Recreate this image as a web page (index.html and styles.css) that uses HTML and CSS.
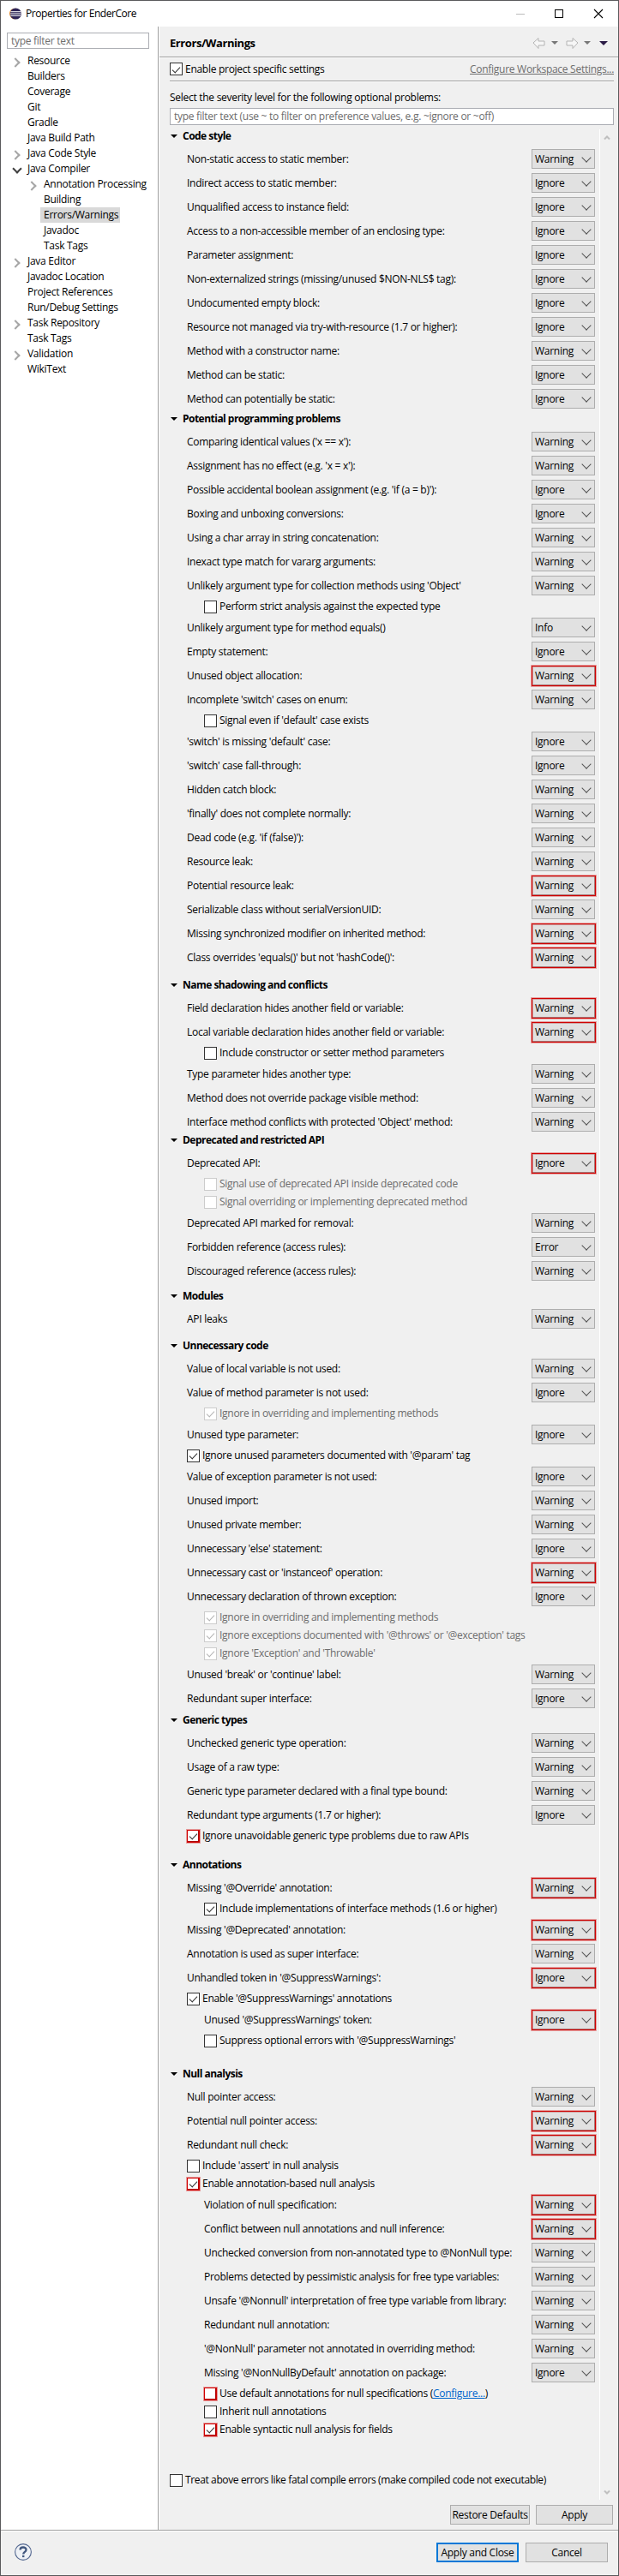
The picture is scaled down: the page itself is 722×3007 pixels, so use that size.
FILE: index.html
```html
<!DOCTYPE html>
<html lang="en">
<head>
<meta charset="utf-8">
<title>Properties for EnderCore</title>
<link rel="stylesheet" href="styles.css">
</head>
<body>
<div class="window">
  <header class="titlebar">
    <svg class="logo" width="14" height="14" viewBox="0 0 14 14"><circle cx="6.3" cy="7" r="6.3" fill="#f0932b"/><circle cx="7.3" cy="7" r="6.6" fill="#2c2255"/><path d="M1.3 4.700h12M.9 7h12.8M1.3 9.300h12" stroke="#fff" stroke-width="1"/></svg>
    <span class="title">Properties for EnderCore</span>
    <svg class="winbtns" width="102" height="12" viewBox="0 0 102 12"><path d="M0 6.5h10" stroke="#bbb"/><rect x="45.5" y="1.5" width="9" height="9" fill="none" stroke="#000"/><path d="M91 1l10 10M101 1L91 11" stroke="#000" stroke-width="1.1"/></svg>
  </header>
  <div class="main">
    <nav class="sidebar">
      <div class="filter">type filter text</div>
      <ul class="tree">
        <li class="closed">Resource</li>
        <li>Builders</li>
        <li>Coverage</li>
        <li>Git</li>
        <li>Gradle</li>
        <li>Java Build Path</li>
        <li class="closed">Java Code Style</li>
        <li class="open">Java Compiler</li>
        <li class="sub closed">Annotation Processing</li>
        <li class="sub">Building</li>
        <li class="sub"><span class="selected">Errors/Warnings</span></li>
        <li class="sub">Javadoc</li>
        <li class="sub">Task Tags</li>
        <li class="closed">Java Editor</li>
        <li>Javadoc Location</li>
        <li>Project References</li>
        <li>Run/Debug Settings</li>
        <li class="closed">Task Repository</li>
        <li>Task Tags</li>
        <li class="closed">Validation</li>
        <li>WikiText</li>
      </ul>
    </nav>
    <div class="page">
      <div class="pagehead">
        <h1>Errors/Warnings</h1>
        <svg width="88" height="14" viewBox="0 0 88 14"><path d="M1 7l6-5.5V5h7v5H7v3.500z" fill="#f6f6f6" stroke="#b4b4b4"/><path d="M22 5h8l-4 4z" fill="#777"/><path d="M53 7l-6-5.500V5h-7v5h7v3.500z" fill="#f6f6f6" stroke="#b4b4b4"/><path d="M60 5h8l-4 4z" fill="#777"/><path d="M78 5h10l-5 5z" fill="#2b1b45"/></svg>
      </div>
      <div class="enable">
        <label class="check on">Enable project specific settings</label>
        <a class="disabled">Configure Workspace Settings...</a>
      </div>
      <p class="hint">Select the severity level for the following optional problems:</p>
      <div class="filter wide">type filter text (use ~ to filter on preference values, e.g. ~ignore or ~off)</div>
      <div class="scroller">
        <div class="options">
          <section class="g1"><h2>Code style</h2>
            <div class="row">Non-static access to static member:<span class="combo">Warning</span></div>
            <div class="row">Indirect access to static member:<span class="combo">Ignore</span></div>
            <div class="row">Unqualified access to instance field:<span class="combo">Ignore</span></div>
            <div class="row">Access to a non-accessible member of an enclosing type:<span class="combo">Ignore</span></div>
            <div class="row">Parameter assignment:<span class="combo">Ignore</span></div>
            <div class="row">Non-externalized strings (missing/unused $NON-NLS$ tag):<span class="combo">Ignore</span></div>
            <div class="row">Undocumented empty block:<span class="combo">Ignore</span></div>
            <div class="row">Resource not managed via try-with-resource (1.7 or higher):<span class="combo">Ignore</span></div>
            <div class="row">Method with a constructor name:<span class="combo">Warning</span></div>
            <div class="row">Method can be static:<span class="combo">Ignore</span></div>
            <div class="row">Method can potentially be static:<span class="combo">Ignore</span></div>
          </section>
          <section class="g2"><h2>Potential programming problems</h2>
            <div class="row">Comparing identical values ('x == x'):<span class="combo">Warning</span></div>
            <div class="row">Assignment has no effect (e.g. 'x = x'):<span class="combo">Warning</span></div>
            <div class="row">Possible accidental boolean assignment (e.g. 'if (a = b)'):<span class="combo">Ignore</span></div>
            <div class="row">Boxing and unboxing conversions:<span class="combo">Ignore</span></div>
            <div class="row">Using a char array in string concatenation:<span class="combo">Warning</span></div>
            <div class="row">Inexact type match for vararg arguments:<span class="combo">Warning</span></div>
            <div class="row">Unlikely argument type for collection methods using 'Object'<span class="combo">Warning</span></div>
            <label class="check in">Perform strict analysis against the expected type</label>
            <div class="row">Unlikely argument type for method equals()<span class="combo">Info</span></div>
            <div class="row">Empty statement:<span class="combo">Ignore</span></div>
            <div class="row">Unused object allocation:<span class="combo red">Warning</span></div>
            <div class="row">Incomplete 'switch' cases on enum:<span class="combo">Warning</span></div>
            <label class="check in">Signal even if 'default' case exists</label>
            <div class="row">'switch' is missing 'default' case:<span class="combo">Ignore</span></div>
            <div class="row">'switch' case fall-through:<span class="combo">Ignore</span></div>
            <div class="row">Hidden catch block:<span class="combo">Warning</span></div>
            <div class="row">'finally' does not complete normally:<span class="combo">Warning</span></div>
            <div class="row">Dead code (e.g. 'if (false)'):<span class="combo">Warning</span></div>
            <div class="row">Resource leak:<span class="combo">Warning</span></div>
            <div class="row">Potential resource leak:<span class="combo red">Warning</span></div>
            <div class="row">Serializable class without serialVersionUID:<span class="combo">Warning</span></div>
            <div class="row">Missing synchronized modifier on inherited method:<span class="combo red">Warning</span></div>
            <div class="row">Class overrides 'equals()' but not 'hashCode()':<span class="combo red">Warning</span></div>
          </section>
          <section class="g3"><h2>Name shadowing and conflicts</h2>
            <div class="row">Field declaration hides another field or variable:<span class="combo red">Warning</span></div>
            <div class="row">Local variable declaration hides another field or variable:<span class="combo red">Warning</span></div>
            <label class="check in">Include constructor or setter method parameters</label>
            <div class="row">Type parameter hides another type:<span class="combo">Warning</span></div>
            <div class="row">Method does not override package visible method:<span class="combo">Warning</span></div>
            <div class="row">Interface method conflicts with protected 'Object' method:<span class="combo">Warning</span></div>
          </section>
          <section class="g4"><h2>Deprecated and restricted API</h2>
            <div class="row">Deprecated API:<span class="combo red">Ignore</span></div>
            <label class="check in off">Signal use of deprecated API inside deprecated code</label>
            <label class="check in off">Signal overriding or implementing deprecated method</label>
            <div class="row">Deprecated API marked for removal:<span class="combo">Warning</span></div>
            <div class="row">Forbidden reference (access rules):<span class="combo">Error</span></div>
            <div class="row">Discouraged reference (access rules):<span class="combo">Warning</span></div>
          </section>
          <section class="g5"><h2>Modules</h2>
            <div class="row">API leaks<span class="combo">Warning</span></div>
          </section>
          <section class="g6"><h2>Unnecessary code</h2>
            <div class="row">Value of local variable is not used:<span class="combo">Warning</span></div>
            <div class="row">Value of method parameter is not used:<span class="combo">Ignore</span></div>
            <label class="check in off on">Ignore in overriding and implementing methods</label>
            <div class="row">Unused type parameter:<span class="combo">Ignore</span></div>
            <label class="check on">Ignore unused parameters documented with '@param' tag</label>
            <div class="row">Value of exception parameter is not used:<span class="combo">Ignore</span></div>
            <div class="row">Unused import:<span class="combo">Warning</span></div>
            <div class="row">Unused private member:<span class="combo">Warning</span></div>
            <div class="row">Unnecessary 'else' statement:<span class="combo">Ignore</span></div>
            <div class="row">Unnecessary cast or 'instanceof' operation:<span class="combo red">Warning</span></div>
            <div class="row">Unnecessary declaration of thrown exception:<span class="combo">Ignore</span></div>
            <label class="check in off on">Ignore in overriding and implementing methods</label>
            <label class="check in off on">Ignore exceptions documented with '@throws' or '@exception' tags</label>
            <label class="check in off on">Ignore 'Exception' and 'Throwable'</label>
            <div class="row">Unused 'break' or 'continue' label:<span class="combo">Warning</span></div>
            <div class="row">Redundant super interface:<span class="combo">Ignore</span></div>
          </section>
          <section class="g7"><h2>Generic types</h2>
            <div class="row">Unchecked generic type operation:<span class="combo">Warning</span></div>
            <div class="row">Usage of a raw type:<span class="combo">Warning</span></div>
            <div class="row">Generic type parameter declared with a final type bound:<span class="combo">Warning</span></div>
            <div class="row">Redundant type arguments (1.7 or higher):<span class="combo">Ignore</span></div>
            <label class="check on red">Ignore unavoidable generic type problems due to raw APIs</label>
          </section>
          <section class="g8"><h2>Annotations</h2>
            <div class="row">Missing '@Override' annotation:<span class="combo red">Warning</span></div>
            <label class="check in on">Include implementations of interface methods (1.6 or higher)</label>
            <div class="row">Missing '@Deprecated' annotation:<span class="combo red">Warning</span></div>
            <div class="row">Annotation is used as super interface:<span class="combo">Warning</span></div>
            <div class="row">Unhandled token in '@SuppressWarnings':<span class="combo red">Ignore</span></div>
            <label class="check on">Enable '@SuppressWarnings' annotations</label>
            <div class="row in">Unused '@SuppressWarnings' token:<span class="combo red">Ignore</span></div>
            <label class="check in">Suppress optional errors with '@SuppressWarnings'</label>
          </section>
          <section class="g9"><h2>Null analysis</h2>
            <div class="row">Null pointer access:<span class="combo">Warning</span></div>
            <div class="row">Potential null pointer access:<span class="combo red">Warning</span></div>
            <div class="row">Redundant null check:<span class="combo red">Warning</span></div>
            <label class="check">Include 'assert' in null analysis</label>
            <label class="check on red">Enable annotation-based null analysis</label>
            <div class="row in">Violation of null specification:<span class="combo red">Warning</span></div>
            <div class="row in">Conflict between null annotations and null inference:<span class="combo red">Warning</span></div>
            <div class="row in">Unchecked conversion from non-annotated type to @NonNull type:<span class="combo">Warning</span></div>
            <div class="row in">Problems detected by pessimistic analysis for free type variables:<span class="combo">Warning</span></div>
            <div class="row in">Unsafe '@Nonnull' interpretation of free type variable from library:<span class="combo">Warning</span></div>
            <div class="row in">Redundant null annotation:<span class="combo">Warning</span></div>
            <div class="row in">'@NonNull' parameter not annotated in overriding method:<span class="combo">Warning</span></div>
            <div class="row in">Missing '@NonNullByDefault' annotation on package:<span class="combo">Ignore</span></div>
            <label class="check in red"><span>Use default annotations for null specifications (<a class="link">Configure...</a>)</span></label>
            <label class="check in">Inherit null annotations</label>
            <label class="check in on red">Enable syntactic null analysis for fields</label>
          </section>
          <label class="check fatal">Treat above errors like fatal compile errors (make compiled code not executable)</label>
        </div>
        <div class="scrollbar">
          <svg width="8" height="7" viewBox="0 0 8 7"><path d="M1 5.500l3-3 3 3" fill="none" stroke="#bfbfbf" stroke-width="2"/></svg>
          <svg width="8" height="7" viewBox="0 0 8 7"><path d="M1 1.500l3 3 3-3" fill="none" stroke="#bfbfbf" stroke-width="2"/></svg>
        </div>
      </div>
      <div class="pagebuttons">
        <span class="button restore">Restore Defaults</span>
        <span class="button apply">Apply</span>
      </div>
    </div>
  </div>
  <footer class="footer">
    <svg width="20" height="20" viewBox="0 0 20 20"><circle cx="10" cy="10" r="9.400" fill="#eef1f6" stroke="#52668f" stroke-width="1.100"/><path d="M6.500 7.600C6.500 3.500 13.500 3.500 13.500 7.400c0 2.400-3.300 2.500-3.300 5" fill="none" stroke="#42587f" stroke-width="2.300"/><rect x="9" y="13.900" width="2.400" height="2.200" fill="#42587f"/></svg>
    <span class="spacer"></span>
    <span class="button primary">Apply and Close</span>
    <span class="button cancel">Cancel</span>
  </footer>
</div>
</body>
</html>
```
FILE: styles.css
```css
* { box-sizing: border-box; }
body {
  margin: 0;
  font: 12px/16px "Open Sans", "Noto Sans", sans-serif;
  letter-spacing: -0.28px;
  color: #000;
  white-space: nowrap;
}
.window {
  width: 722px;
  height: 3007px;
  border: 1px solid #5a5a5c;
  background: #f0f0f0;
  display: flex;
  flex-direction: column;
}
.titlebar {
  height: 30px;
  background: #fff;
  display: flex;
  align-items: center;
  padding: 0 17px 0 10px;
}
.title { margin-left: 5px; flex: 1; letter-spacing: -0.45px; }
.main { display: flex; height: 2922px; }
.sidebar {
  width: 184px;
  background: #fff;
  border-right: 1px solid #a0a0a0;
  padding: 7px 10px 0 7px;
}
.filter {
  height: 19px;
  border: 1px solid #abadb3;
  background: #fff;
  color: #6d6d6d;
  padding-left: 4px;
  line-height: 17px;
}
.tree { list-style: none; margin: 5px 0 0; padding: 0; }
.tree li { height: 18px; line-height: 18px; padding-left: 24px; position: relative; }
.tree .sub { padding-left: 43px; }
.tree .closed::before, .tree .open::before {
  content: "";
  position: absolute;
  left: 6px;
  top: 7px;
  width: 6px;
  height: 6px;
  border: solid #a6a6a6;
  border-width: 2px 2px 0 0;
  transform: rotate(45deg);
}
.tree .open::before {
  left: 8px;
  top: 5px;
  border-color: #404040;
  transform: rotate(135deg);
}
.tree .sub.closed::before { left: 25px; }
.selected { display: inline-block; margin-left: -4px; padding: 0 4px; width: 93px; background: #d9d9d9; }
.page { flex: 1; border-left: 1px solid #fff; }
.pagehead {
  height: 36px;
  display: flex;
  justify-content: space-between;
  align-items: center;
  padding: 3px 12px 0 12px;
  border-bottom: 1px solid #a0a0a0;
  box-shadow: 0 1px #fff;
}
.pagehead h1 { font-size: 13px; margin: 0; letter-spacing: -0.43px; }
.enable {
  margin: 0 5px 0 12px;
  height: 28px;
  display: flex;
  justify-content: space-between;
  align-items: center;
  border-bottom: 1px solid #a0a0a0;
  box-shadow: 0 1px #fff;
}
.disabled { color: #6d6d6d; text-decoration: underline; }
.hint { margin: 11px 0 4px 12px; }
.wide { margin: 0 5px 5px 12px; height: 20px; line-height: 18px; }
.scroller { display: flex; height: 2767px; }
.options { width: 514px; border-right: 1px solid #fff; padding-left: 12px; }
.scrollbar {
  flex: 1;
  display: flex;
  flex-direction: column;
  justify-content: space-between;
  align-items: center;
  padding: 6px 6px 5px 0;
}
section { display: flex; flex-direction: column; gap: 5px; padding-left: 20px; }
h2 {
  font-size: 12px;
  line-height: 16px;
  margin: 0 0 2px -20px;
  padding-left: 15px;
  letter-spacing: -0.52px;
  position: relative;
}
h2::before {
  content: "";
  position: absolute;
  left: 1px;
  top: 6px;
  border: 4px solid transparent;
  border-top-color: #000;
  border-bottom: 0;
}
.g1 { padding-bottom: 4px; }
.g2 { padding-bottom: 13px; }
.g3 { padding-bottom: 2px; }
.g4 { padding-bottom: 10px; }
.g5 { padding-bottom: 12px; }
.g6 { padding-bottom: 6px; }
.g7 { padding-bottom: 18px; }
.g8 { padding-bottom: 23px; }
.g9 { padding-bottom: 43px; }
.row {
  height: 23px;
  display: flex;
  justify-content: space-between;
  align-items: center;
  padding-right: 5px;
}
.in { padding-left: 20px; }
.combo {
  width: 74px;
  height: 23px;
  border: 1px solid #adadad;
  background: #e1e1e1;
  line-height: 21px;
  padding-left: 3px;
  position: relative;
}
.combo::after {
  content: "";
  position: absolute;
  right: 5px;
  top: 5px;
  width: 7px;
  height: 7px;
  border: solid #555;
  border-width: 0 1px 1px 0;
  transform: rotate(45deg);
}
.combo.red::before {
  content: "";
  position: absolute;
  inset: -1px -2px -2px -1px;
  border: 1px solid #d00000;
  box-shadow: 0 0 0 1px rgba(208, 0, 0, .3), inset 0 0 0 1px rgba(160, 0, 0, .3);
}
.check { height: 16px; display: flex; align-items: center; position: relative; }
.check::before {
  content: "";
  width: 13px;
  height: 13px;
  margin-right: 3px;
  border: 1px solid #333;
  background: #fff;
  flex: none;
}
.check.on::after {
  content: "";
  position: absolute;
  left: 3px;
  top: 5px;
  width: 8px;
  height: 4px;
  border: solid #333;
  border-width: 0 0 1.300px 1.300px;
  transform: rotate(-47deg);
}
.check.in.on::after { left: 23px; }
.check.off { color: #6d6d6d; }
.check.off::before { border-color: #ccc; }
.check.off.on::after { border-color: #b5b5b5; }
.check.red::before {
  border-color: #d00000;
  box-shadow: 0 0 0 1px rgba(208, 0, 0, .35), inset -1px -1px #b00000;
}
.fatal { letter-spacing: -0.37px; }
.link { color: #0066cc; text-decoration: underline; }
.button {
  height: 23px;
  line-height: 21px;
  border: 1px solid #adadad;
  background: #e1e1e1;
  text-align: center;
}
.pagebuttons { display: flex; justify-content: flex-end; gap: 7px; padding: 6px 6px 0 0; }
.restore { width: 93px; }
.apply { width: 90px; }
.footer {
  height: 53px;
  border-top: 1px solid #a0a0a0;
  box-shadow: inset 0 1px #fff;
  display: flex;
  align-items: center;
  gap: 8px;
  padding: 2px 12px 4px 16px;
}
.spacer { flex: 1; }
.primary { width: 96px; border: 2px solid #0078d7; line-height: 19px; }
.cancel { width: 96px; }
```
